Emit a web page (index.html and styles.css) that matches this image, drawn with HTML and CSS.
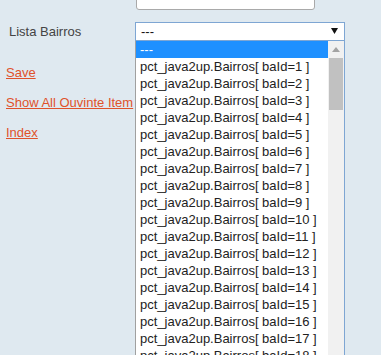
FILE: index.html
```html
<!DOCTYPE html>
<html lang="pt">
<head>
    <meta charset="UTF-8">
    <title>Ouvinte</title>
    <link rel="stylesheet" href="styles.css">
</head>
<body>
    <div class="form">
        <div class="row">
            <span class="label"></span>
            <input class="text" type="text">
        </div>
        <div class="row">
            <span class="label">Lista Bairros</span>
            <div class="combo">
                <div class="select">
                    <span>---</span>
                    <svg width="7" height="6" viewBox="0 0 7 6"><polygon points="0,0 7,0 3.5,6" fill="#111"/></svg>
                </div>
                <div class="dropdown">
                    <ul class="options" id="options">
                        <li class="selected">---</li>
                    </ul>
                    <div class="scrollbar">
                        <div class="arrow-up">
                            <svg width="8" height="5" viewBox="0 0 8 5"><polygon points="0,5 8,5 4,0" fill="#a3a3a3"/></svg>
                        </div>
                        <div class="thumb"></div>
                    </div>
                </div>
            </div>
        </div>
    </div>

    <div class="links">
        <a href="#">Save</a>
        <a href="#">Show All Ouvinte Item</a>
        <a href="#">Index</a>
    </div>

    <script>
        // opções do select
        const list = document.getElementById('options');
        for (let i = 1; i <= 19; i++) {
            const li = document.createElement('li');
            li.textContent = `pct_java2up.Bairros[ baId=${i} ]`;
            list.appendChild(li);
        }
    </script>
</body>
</html>
```

FILE: styles.css
```css
html, body {
    height: 100%;
    overflow: hidden;
}
body {
    margin: 0;
    background-color: #dfe9f0;
    font-family: "Liberation Sans", Arial, sans-serif;
    font-size: 13px;
    color: #444;
}
.form {
    margin-top: -10px;
    display: flex;
    flex-direction: column;
    gap: 12px;
}
.row {
    display: grid;
    grid-template-columns: 135px 210px;
    align-items: center;
}
.label {
    padding-left: 9px;
    line-height: 19px;
}
.text {
    box-sizing: border-box;
    width: 179px;
    height: 20px;
    margin: 0 0 0 1px;
    border: 1px solid #a9a9a9;
    border-radius: 3px;
    background: #fff;
}
.combo {
    position: relative;
}
.select {
    box-sizing: border-box;
    height: 19px;
    border: 1px solid #7ea6d3;
    background: #fff;
    color: #111;
    display: flex;
    align-items: center;
    justify-content: space-between;
    padding: 0 6px 0 5px;
}
.select svg {
    margin-top: -1px;
}
.dropdown {
    position: absolute;
    top: 100%;
    left: 0;
    width: 210px;
    height: 340px;
    box-sizing: border-box;
    border: 1px solid #a0a0a0;
    border-top: none;
    border-right-color: #7ea6d3;
    background: #fff;
    display: flex;
    overflow: hidden;
    z-index: 2;
}
.options {
    list-style: none;
    margin: 0;
    padding: 0;
    flex: 1;
}
.options li {
    height: 17px;
    line-height: 17px;
    padding-left: 4px;
    color: #222;
    white-space: nowrap;
}
.options li.selected {
    background-color: #1e90ff;
    color: #fff;
}
.scrollbar {
    width: 16px;
    background: #f1f1f1;
    display: flex;
    flex-direction: column;
    align-items: center;
}
.arrow-up {
    height: 17px;
    display: flex;
    align-items: center;
    justify-content: center;
}
.thumb {
    width: 14px;
    height: 52px;
    background: #c1c1c1;
}
.links {
    margin-top: 24px;
    padding-left: 6px;
    display: flex;
    flex-direction: column;
    align-items: flex-start;
    gap: 14px;
}
.links a {
    color: #e0522b;
    line-height: 16px;
    white-space: nowrap;
}
```
